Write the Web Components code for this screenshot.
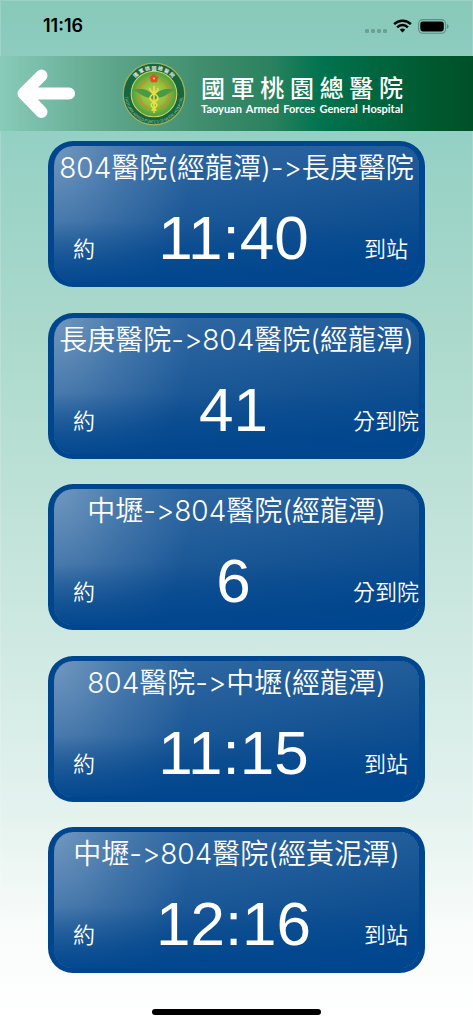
<!DOCTYPE html>
<html lang="zh-Hant">
<head>
<meta charset="utf-8">
<meta name="viewport" content="width=device-width, initial-scale=1">
<title>國軍桃園總醫院 交通車</title>
<style>
  html { height: 100%; }
  body { margin: 0; min-height: 100%; display: flex; font-family: Inter, "Noto Sans CJK TC", sans-serif; }
</style>
</head>
<body>
<shuttle-app></shuttle-app>

<template id="status-bar">
  <style>
    :host { display: flex; align-items: center; justify-content: space-between; height: 50px; padding: 1px 24px 5px 43px; box-sizing: content-box; color: #000; }
    time { font-size: 18px; line-height: 24px; font-weight: 600; }
    .icons { display: flex; align-items: center; gap: 6px; }
    svg { display: block; }
    .dots { align-self: flex-end; margin-bottom: 1px; }
  </style>
  <time>11:16</time>
  <div class="icons">
    <svg class="dots" width="22" height="4" viewBox="0 0 22 4" fill="#6ba195"><rect width="4" height="4" rx="1.3"/><rect x="6" width="4" height="4" rx="1.3"/><rect x="12" width="4" height="4" rx="1.3"/><rect x="18" width="4" height="4" rx="1.3"/></svg>
    <svg width="19" height="14" viewBox="0 0 19 14" fill="none" stroke="#000" stroke-width="2.5"><path d="M1.1 5.1a12 12 0 0 1 16.8 0"/><path d="M4.1 8.3a7.7 7.7 0 0 1 10.8 0"/><path d="M9.5 13.6 6.8 10.8a3.9 3.9 0 0 1 5.4 0z" fill="#000" stroke="none"/></svg>
    <svg width="31" height="15" viewBox="0 0 31 15"><rect x=".6" y=".6" width="27" height="13.6" rx="4" fill="none" stroke="#5c8f83" stroke-width="1.1"/><rect x="2.3" y="2.4" width="23.5" height="10" rx="2.4"/><path d="M29 5v5q1.6-.8 1.6-2.5T29 5z" fill="#5c8f83"/></svg>
  </div>
</template>

<template id="hospital-emblem">
  <style>
    :host { display: block; width: 64px; height: 64px; }
    svg { display: block; width: 100%; height: 100%; }
    text { font-family: "Noto Sans CJK TC", sans-serif; }
  </style>
  <svg viewBox="-32 -32 64 64" role="img" aria-label="院徽">
    <defs>
      <radialGradient id="core"><stop offset="0" stop-color="#bfd45c"/><stop offset=".55" stop-color="#8fc03b"/><stop offset="1" stop-color="#4d9e3d"/></radialGradient>
      <path id="top" d="M-24.4 0A24.4 24.4 0 0 1 24.4 0"/>
      <path id="low" d="M-28.3-7A29.2 29.2 0 1 0 28.3-7"/>
    </defs>
    <circle r="30.8" fill="#176541" stroke="#9bb158" stroke-width="1.3"/>
    <circle r="22.8" fill="url(#core)" stroke="#c6d763" stroke-width="1.1"/>
    <text font-size="5" font-weight="700" fill="#e5efe2" text-anchor="middle"><textPath href="#top" startOffset="50%">國 軍 桃 園 總 醫 院</textPath></text>
    <text font-size="4" fill="#9fc4a4" text-anchor="middle"><textPath href="#low" startOffset="50%">TAOYUAN ARMED FORCES GENERAL HOSPITAL</textPath></text>
    <g fill="none" stroke="#c88b31" stroke-width="2.4" stroke-dasharray="2.4 1"><path d="M-8-13C-18-9-19 8-6 14"/><path d="M8-13C18-9 19 8 6 14"/></g>
    <path d="M-21-4C-13-6-6-5-1 1H1C6-5 13-6 21-4 16-3 13 3 3 4L0 6-3 4C-13 3-16-3-21-4z" fill="#489a45"/>
    <g fill="none" stroke="#f1df45" stroke-width="1.5"><path d="M0-8V19"/><path d="M-4-6C-5-1 4 0 4 4S-3 8-3 11 2 14 2 17"/><path d="M4-6C5-1-4 0-4 4S3 8 3 11-2 14-2 17"/></g>
    <g fill="#e94b25"><circle cy="-18" r="1.9"/><circle cx="2.4" cy="-16.200" r="1.9"/><circle cx="1.5" cy="-13.500" r="1.9"/><circle cx="-1.5" cy="-13.500" r="1.9"/><circle cx="-2.4" cy="-16.200" r="1.9"/></g><circle cy="-15.500" r="1.1" fill="#f3d43c"/>
  </svg>
</template>

<template id="app-header">
  <style>
    :host { display: flex; align-items: center; height: 75px; background: linear-gradient(90deg, #88cbb9 0%, #5da58a 24%, #3d8b6b 45%, #2b825f 57%, #00734f 68%, #006b45 75%, #005930 91%, #005028 100%); }
    button { flex: none; margin: 0; padding: 0 0 0 16px; border: 0; background: none; cursor: pointer; }
    button svg { display: block; }
    hospital-emblem { flex: none; margin-left: 46px; }
    .name { flex: none; width: 202px; margin-left: 15px; color: #fff; text-align-last: justify; }
    h1 { margin: 0 0 2px; font: 500 24px/28px "Noto Sans CJK TC", sans-serif; }
    p { margin: 0; font: 700 11px/12px Lato, sans-serif; white-space: nowrap; }
  </style>
  <button type="button" aria-label="返回"><svg width="60" height="50" viewBox="0 0 60 50" fill="none" stroke="#fff" stroke-width="12" stroke-linecap="round" stroke-linejoin="round"><path d="M25.500 6.500 7.500 24.500 25.500 43M8 24.500H53"/><path d="M10 24.500H24L21 21z" stroke-width="3" fill="#fff"/></svg></button>
  <hospital-emblem></hospital-emblem>
  <div class="name"><h1>國軍桃園總醫院</h1><p>Taoyuan Armed Forces General Hospital</p></div>
</template>

<template id="route-card">
  <style>
    :host { display: block; box-sizing: border-box; height: 146px; border-radius: 25px; border: solid #00468e; border-width: 5px 6px; color: #fff; font-variant-ligatures: none; font-feature-settings: "calt" 0;
      background: linear-gradient(to bottom, rgb(0 70 142 / 0) 55%, rgb(0 70 142 / .9) 100%) padding-box,
        radial-gradient(ellipse 38% 150% at 0 0, rgb(255 255 255 / .3), rgb(255 255 255 / .12) 50%, rgb(255 255 255 / 0)) padding-box,
        linear-gradient(168deg, #336ba4 0%, #235e9b 35%, #125192 62%, #00468e 95%) padding-box #00468e; }
    h2 { margin: 6px -6px 0; font-size: 28px; line-height: 32px; font-weight: 350; text-align: center; white-space: nowrap; }
    .eta { display: grid; grid-template-columns: 72px 1fr 78px; align-items: center; margin: 18px -6px 0; text-align: center; }
    .side { padding-top: 22px; font-size: 22px; line-height: 24px; font-weight: 350; white-space: nowrap; }
    .value { font: 62px/72px "Liberation Sans", sans-serif; white-space: nowrap; }
  </style>
  <h2><slot></slot></h2>
  <div class="eta"><span class="side">約</span><span class="value"><slot name="value"></slot></span><span class="side"><slot name="unit"></slot></span></div>
</template>

<template id="shuttle-app">
  <style>
    :host { flex: 1; min-width: 0; display: flex; flex-direction: column; box-shadow: inset 0 0 0 1px rgb(255 255 255 / .16);
      background: linear-gradient(#88c9ba 0%, #94d0c4 13%, #a8d8cb 30%, #bbe0d5 46%, #cfe9e2 63%, #e5f3ef 80%, #f9fcfb 91%, #fff 100%); }
    main { flex: 1; display: flex; flex-direction: column; justify-content: space-between; gap: 12px; padding: 10px 48px 36px; }
    footer { display: flex; justify-content: center; padding-bottom: 9px; }
    footer i { width: 169px; height: 6px; border-radius: 3px; background: #000; }
  </style>
  <status-bar></status-bar>
  <app-header></app-header>
  <main>
    <route-card>804醫院(經龍潭)-&gt;長庚醫院<span slot="value">11:40</span><span slot="unit">到站</span></route-card>
    <route-card>長庚醫院-&gt;804醫院(經龍潭)<span slot="value">41</span><span slot="unit">分到院</span></route-card>
    <route-card>中壢-&gt;804醫院(經龍潭)<span slot="value">6</span><span slot="unit">分到院</span></route-card>
    <route-card>804醫院-&gt;中壢(經龍潭)<span slot="value">11:15</span><span slot="unit">到站</span></route-card>
    <route-card>中壢-&gt;804醫院(經黃泥潭)<span slot="value">12:16</span><span slot="unit">到站</span></route-card>
  </main>
  <footer><i></i></footer>
</template>

<script>
  class TemplateElement extends HTMLElement {
    constructor() {
      super();
      const template = document.getElementById(this.localName);
      this.attachShadow({ mode: "open" }).append(template.content.cloneNode(true));
    }
  }
  for (const name of ["status-bar", "hospital-emblem", "app-header", "route-card", "shuttle-app"]) {
    customElements.define(name, class extends TemplateElement {});
  }
</script>
</body>
</html>
